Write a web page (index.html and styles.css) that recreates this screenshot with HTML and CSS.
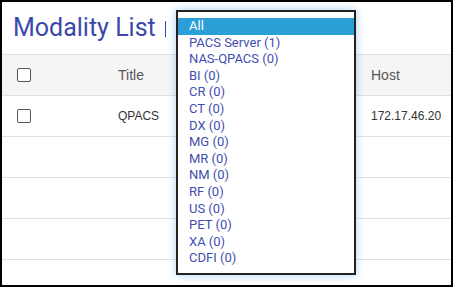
FILE: index.html
```html
<!DOCTYPE html>
<html lang="en">
<head>
    <meta charset="UTF-8">
    <meta name="viewport" content="width=device-width, initial-scale=1.0">
    <title>Modality List</title>
    <link rel="stylesheet" href="styles.css">
</head>
<body>
    <div class="frame">
        <div class="page-head">
            <h1 class="page-title">Modality List</h1>
            <span class="divider"></span>
        </div>

        <div class="grid-row grid-head">
            <div class="cell cell-check"><span class="checkbox"></span></div>
            <div class="cell">Title</div>
            <div class="cell">Host</div>
        </div>
        <div class="grid-row">
            <div class="cell cell-check"><span class="checkbox"></span></div>
            <div class="cell">QPACS</div>
            <div class="cell">172.17.46.20</div>
        </div>
        <div class="grid-row"></div>
        <div class="grid-row"></div>
        <div class="grid-row"></div>

        <!-- open modality filter -->
        <ul class="dropdown">
            <li class="option selected">All</li>
            <li class="option">PACS Server (1)</li>
            <li class="option">NAS-QPACS (0)</li>
            <li class="option">BI (0)</li>
            <li class="option">CR (0)</li>
            <li class="option">CT (0)</li>
            <li class="option">DX (0)</li>
            <li class="option">MG (0)</li>
            <li class="option">MR (0)</li>
            <li class="option">NM (0)</li>
            <li class="option">RF (0)</li>
            <li class="option">US (0)</li>
            <li class="option">PET (0)</li>
            <li class="option">XA (0)</li>
            <li class="option">CDFI (0)</li>
        </ul>
    </div>
</body>
</html>
```

FILE: styles.css
```css
html, body {
    margin: 0;
    padding: 0;
    background: #fff;
}
.frame {
    position: relative;
    width: 453px;
    height: 287px;
    box-sizing: border-box;
    border: 2px solid #000;
    overflow: hidden;
    font-family: 'Liberation Sans', Arial, sans-serif;
}
.page-head {
    height: 52px;
    display: flex;
    align-items: flex-start;
    padding: 0 0 0 11px;
    box-sizing: border-box;
}
.page-title {
    margin: 0;
    padding-top: 11px;
    font-family: 'Roboto', sans-serif;
    font-weight: 400;
    font-size: 25px;
    line-height: 30px;
    color: #3949ab;
}
.divider {
    width: 1px;
    height: 16px;
    margin: 19px 0 0 9px;
    background: #3949ab;
}
.grid-row {
    display: grid;
    grid-template-columns: 116px 253px 1fr;
    align-items: center;
    height: 40px;
    border-bottom: 1px solid #e0e0e0;
    font-size: 12px;
    color: #333;
}
.grid-head {
    border-top: 1px solid #e0e0e0;
    background: #f5f5f5;
    font-size: 14px;
    color: #555;
}
.cell-check {
    padding-left: 15px;
    display: flex;
    align-items: center;
}
.checkbox {
    width: 12px;
    height: 12px;
    border: 1.5px solid #555;
    border-radius: 2px;
    background: #fff;
}
.dropdown {
    position: absolute;
    left: 174px;
    top: 8px;
    width: 180px;
    height: 265px;
    box-sizing: border-box;
    margin: 0;
    padding: 6px 0;
    list-style: none;
    background: #fff;
    border: 2px solid #222;
    box-shadow: 0 0 8px rgba(102, 175, 233, 0.6);
    font-family: 'Roboto', sans-serif;
    font-size: 13px;
}
.option {
    height: 16.6px;
    line-height: 16.6px;
    padding-left: 11px;
    color: #3f4fb0;
    white-space: nowrap;
}
.option.selected {
    background: #2a9fd8;
    color: #fff;
}
```
